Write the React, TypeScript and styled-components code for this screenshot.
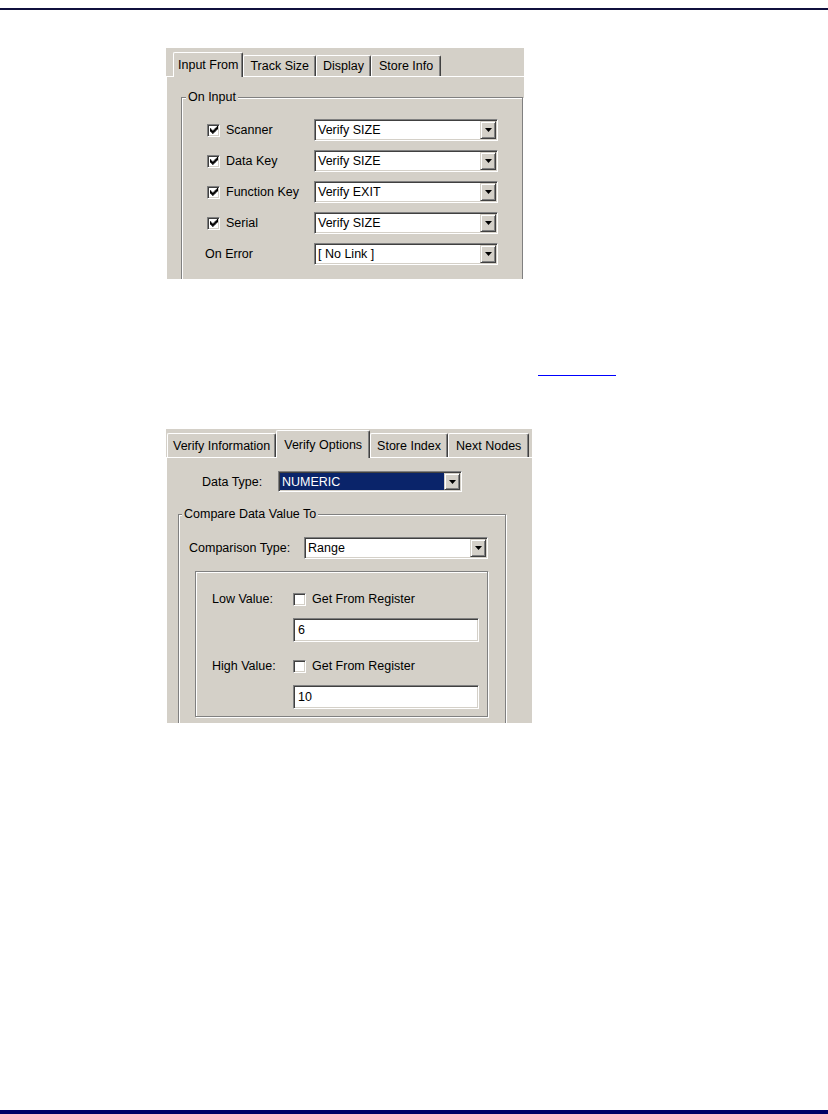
import React from "react";
import styled, { createGlobalStyle } from "styled-components";

const Global = createGlobalStyle`
  html, body { margin: 0; padding: 0; background: #fff; }
  body {
    font-family: "Liberation Sans", Arial, sans-serif;
    font-size: 12.5px;
    color: #000;
  }
`;

const Page = styled.div`
  display: flex;
  flex-direction: column;
  min-height: 100vh;
`;

const TopRule = styled.div`
  margin-top: 8px;
  height: 2px;
  background: #10103e;
`;

const BottomBar = styled.div`
  margin-top: auto;
  height: 4px;
  background: #000066;
`;

const Dialog = styled.section<{ $top: number; $width: number; $height: number; $padTop: number }>`
  margin-top: ${(p) => p.$top}px;
  margin-left: 166px;
  width: ${(p) => p.$width}px;
  height: ${(p) => p.$height}px;
  box-sizing: border-box;
  padding-top: ${(p) => p.$padTop}px;
  background: #d4d0c8;
  overflow: hidden;
  display: flex;
  flex-direction: column;
`;

const TabStrip = styled.div<{ $indent: number }>`
  display: flex;
  align-items: flex-end;
  padding-left: ${(p) => p.$indent}px;
  position: relative;
  z-index: 1;
`;

const Tab = styled.div<{ $active?: boolean; $h: number; $px: number }>`
  height: ${(p) => p.$h}px;
  box-sizing: border-box;
  padding: 0 ${(p) => p.$px}px;
  display: flex;
  align-items: center;
  justify-content: center;
  white-space: nowrap;
  background: #d4d0c8;
  border-top: 1px solid #fff;
  border-left: 1px solid #fff;
  border-right: 1px solid #404040;
  box-shadow: inset -1px 0 0 #808080;
  border-radius: 2px 2px 0 0;
  margin-bottom: ${(p) => (p.$active ? -1 : 0)}px;
`;

const TabBody = styled.div<{ $padTop: number; $padLeft: number }>`
  flex: 1;
  border-top: 1px solid #fff;
  border-left: 1px solid #fff;
  padding: ${(p) => p.$padTop}px 0 0 ${(p) => p.$padLeft}px;
  display: flex;
  flex-direction: column;
  align-items: flex-start;
`;

const GroupBox = styled.div<{ $width: number; $padTop: number; $padLeft: number; $mt?: number; $ml?: number }>`
  position: relative;
  box-sizing: border-box;
  width: ${(p) => p.$width}px;
  margin-top: ${(p) => p.$mt ?? 0}px;
  margin-left: ${(p) => p.$ml ?? 0}px;
  border: 1px solid #808080;
  box-shadow: inset 1px 1px 0 #fff, 1px 1px 0 #fff;
  padding: ${(p) => p.$padTop}px 0 40px ${(p) => p.$padLeft}px;
`;

const GroupTitle = styled.span<{ $left: number }>`
  position: absolute;
  top: -8px;
  left: ${(p) => p.$left}px;
  padding: 0 2px;
  line-height: 15px;
  background: #d4d0c8;
  white-space: nowrap;
`;

const InnerBox = styled.div`
  box-sizing: border-box;
  width: 293px;
  margin-top: 12px;
  margin-left: 6px;
  border: 1px solid #808080;
  box-shadow: inset 1px 1px 0 #fff, 1px 1px 0 #fff;
  padding: 20px 0 7px 16px;
  display: flex;
  flex-direction: column;
  gap: 17px;
`;

const FieldGrid = styled.div<{ $cols: string; $rowGap: number; $pl?: number }>`
  display: grid;
  grid-template-columns: ${(p) => p.$cols};
  row-gap: ${(p) => p.$rowGap}px;
  align-items: center;
  padding-left: ${(p) => p.$pl ?? 0}px;
`;

const Label = styled.span<{ $shift?: number }>`
  white-space: nowrap;
  margin-left: ${(p) => p.$shift ?? 0}px;
`;

const CheckLabel = styled.label`
  display: flex;
  align-items: center;
  gap: 6px;
  white-space: nowrap;
`;

const CheckBox = styled.span`
  width: 13px;
  height: 13px;
  flex: none;
  box-sizing: border-box;
  background: #fff;
  border: 1px solid;
  border-color: #808080 #fff #fff #808080;
  box-shadow: inset 1px 1px 0 #404040, inset -1px -1px 0 #d4d0c8;
  display: flex;
  align-items: center;
  justify-content: center;
`;

const Combo = styled.div<{ $w: number; $h: number }>`
  width: ${(p) => p.$w}px;
  height: ${(p) => p.$h}px;
  box-sizing: border-box;
  display: flex;
  align-items: stretch;
  background: #fff;
  border: 1px solid;
  border-color: #808080 #fff #fff #808080;
  box-shadow: inset 1px 1px 0 #404040, inset -1px -1px 0 #d4d0c8;
  padding: 1px;
`;

const ComboText = styled.span<{ $selected?: boolean }>`
  flex: 1;
  display: flex;
  align-items: center;
  padding-left: 2px;
  white-space: nowrap;
  overflow: hidden;
  background: ${(p) => (p.$selected ? "#0a246a" : "transparent")};
  color: ${(p) => (p.$selected ? "#fff" : "#000")};
`;

const DropButton = styled.span`
  width: 16px;
  flex: none;
  box-sizing: border-box;
  background: #d4d0c8;
  border: 1px solid;
  border-color: #d4d0c8 #404040 #404040 #d4d0c8;
  box-shadow: inset 1px 1px 0 #fff, inset -1px -1px 0 #808080;
  display: flex;
  align-items: center;
  justify-content: center;
`;

const TextBox = styled.div`
  width: 186px;
  height: 24px;
  box-sizing: border-box;
  display: flex;
  align-items: center;
  background: #fff;
  border: 1px solid;
  border-color: #808080 #fff #fff #808080;
  box-shadow: inset 1px 1px 0 #404040, inset -1px -1px 0 #d4d0c8;
  padding-left: 4px;
`;

const LinkRow = styled.div`
  margin-top: 96px;
  padding-left: 538px;
  display: flex;
`;

const BlankLink = styled.a`
  display: block;
  width: 78px;
  height: 1px;
  background: #0000ff;
`;

const Check = () => (
  <svg width="8" height="8" viewBox="0 0 7 7" aria-hidden="true">
    <path
      d="M0 2h1v3H0zM1 3h1v3H1zM2 4h1v3H2zM3 3h1v3H3zM4 2h1v3H4zM5 1h1v3H5zM6 0h1v3H6z"
      fill="#000"
    />
  </svg>
);

const Arrow = () => (
  <svg width="7" height="4" viewBox="0 0 7 4" aria-hidden="true">
    <polygon points="0,0 7,0 3.5,4" fill="#000" />
  </svg>
);

const Select = ({ value, w, h, selected }: { value: string; w: number; h: number; selected?: boolean }) => (
  <Combo $w={w} $h={h}>
    <ComboText $selected={selected}>{value}</ComboText>
    <DropButton>
      <Arrow />
    </DropButton>
  </Combo>
);

const Checked = ({ label, checked = true }: { label: string; checked?: boolean }) => (
  <CheckLabel>
    <CheckBox>{checked && <Check />}</CheckBox>
    {label}
  </CheckLabel>
);

const inputRows = [
  { label: "Scanner", value: "Verify SIZE" },
  { label: "Data Key", value: "Verify SIZE" },
  { label: "Function Key", value: "Verify EXIT" },
  { label: "Serial", value: "Verify SIZE" },
];

const ValueBlock = ({ label, value }: { label: string; value: string }) => (
  <FieldGrid $cols="81px 186px" $rowGap={12}>
    <Label>{label}</Label>
    <Checked label="Get From Register" checked={false} />
    <span />
    <TextBox>{value}</TextBox>
  </FieldGrid>
);

export default function App() {
  return (
    <>
      <Global />
      <Page>
        <TopRule />

        <Dialog $top={38} $width={358} $height={231} $padTop={4}>
          <TabStrip $indent={7}>
            <Tab $active $h={25} $px={4}>Input From</Tab>
            <Tab $h={21} $px={6}>Track Size</Tab>
            <Tab $h={21} $px={6}>Display</Tab>
            <Tab $h={21} $px={7}>Store Info</Tab>
          </TabStrip>
          <TabBody $padTop={20} $padLeft={14}>
            <GroupBox $width={342} $padTop={21} $padLeft={25}>
              <GroupTitle $left={4}>On Input</GroupTitle>
              <FieldGrid $cols="107px 184px" $rowGap={9}>
                {inputRows.map((r) => (
                  <React.Fragment key={r.label}>
                    <Checked label={r.label} />
                    <Select value={r.value} w={184} h={22} />
                  </React.Fragment>
                ))}
                <Label $shift={-2}>On Error</Label>
                <Select value="[ No Link ]" w={184} h={22} />
              </FieldGrid>
            </GroupBox>
          </TabBody>
        </Dialog>

        <LinkRow>
          <BlankLink href="#" aria-label="link" />
        </LinkRow>

        <Dialog $top={53} $width={366} $height={294} $padTop={1}>
          <TabStrip $indent={1}>
            <Tab $h={24} $px={5}>Verify Information</Tab>
            <Tab $active $h={28} $px={7}>Verify Options</Tab>
            <Tab $h={24} $px={6}>Store Index</Tab>
            <Tab $h={24} $px={7}>Next Nodes</Tab>
          </TabStrip>
          <TabBody $padTop={13} $padLeft={0}>
            <FieldGrid $cols="76px 184px" $rowGap={0} $pl={35}>
              <Label>Data Type:</Label>
              <Select value="NUMERIC" w={184} h={21} selected />
            </FieldGrid>
            <GroupBox $width={328} $padTop={22} $padLeft={10} $mt={22} $ml={11}>
              <GroupTitle $left={3}>Compare Data Value To</GroupTitle>
              <FieldGrid $cols="115px 184px" $rowGap={0}>
                <Label>Comparison Type:</Label>
                <Select value="Range" w={184} h={22} />
              </FieldGrid>
              <InnerBox>
                <ValueBlock label="Low Value:" value="6" />
                <ValueBlock label="High Value:" value="10" />
              </InnerBox>
            </GroupBox>
          </TabBody>
        </Dialog>

        <BottomBar />
      </Page>
    </>
  );
}
